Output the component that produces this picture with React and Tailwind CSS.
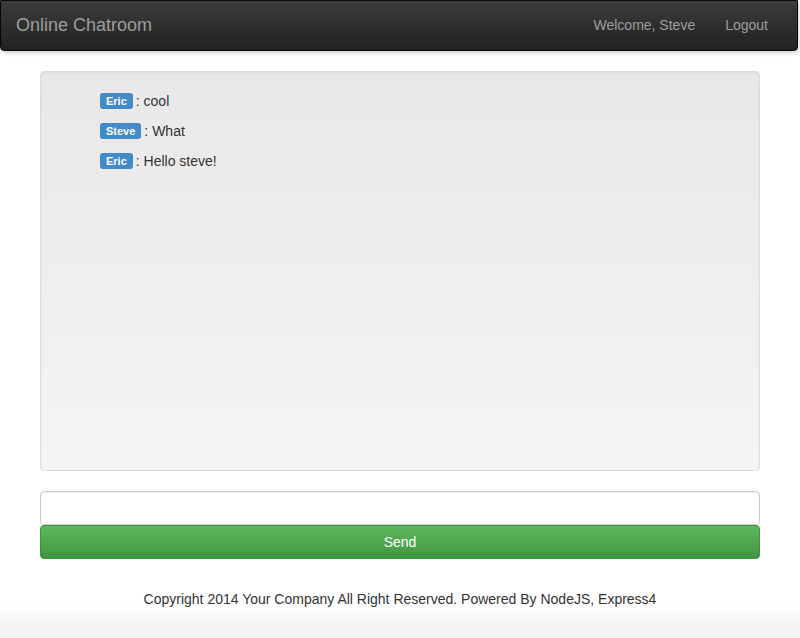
import React from "react";

const font = { fontFamily: '"Liberation Sans", Arial, Helvetica, sans-serif' };

function Msg({ name, text }) {
  return (
    <div className="flex items-center h-5 text-[14px] text-[#333]">
      <span className="inline-flex items-center h-4 px-[6px] rounded-[3px] bg-[#428bca] text-white text-[11px] font-bold leading-none">
        {name}
      </span>
      <span className="ml-[3px]">: {text}</span>
    </div>
  );
}

export default function App() {
  return (
    <div className="min-h-[638px] bg-white flex flex-col" style={font}>
      <div className="h-[51px] w-[798px] flex items-center justify-between rounded-b-[4px] border border-[#080808] bg-gradient-to-b from-[#3c3c3c] to-[#222222] shadow-[0_1px_5px_rgba(0,0,0,0.25)]">
        <span className="pl-[15px] text-[18px] text-[#9d9d9d]">Online Chatroom</span>
        <div className="flex items-center pr-[14px] text-[14px] text-[#9d9d9d]">
          <span className="px-[15px]">Welcome, Steve</span>
          <span className="px-[15px]">Logout</span>
        </div>
      </div>
      <div className="px-[40px] pt-[20px]">
        <div className="h-[400px] rounded-[4px] border border-[#dcdcdc] bg-gradient-to-b from-[#e8e8e8] to-[#f5f5f5] shadow-[inset_0_1px_3px_rgba(0,0,0,0.05)] pt-[19px] pl-[59px] flex flex-col gap-[10px]">
          <Msg name="Eric" text="cool" />
          <Msg name="Steve" text="What" />
          <Msg name="Eric" text="Hello steve!" />
        </div>
        <div className="mt-[20px] h-[34px] rounded-[4px] border border-[#cccccc] bg-white shadow-[inset_0_1px_1px_rgba(0,0,0,0.075)]"></div>
        <div className="h-[34px] rounded-[4px] border border-[#3e8f3e] bg-gradient-to-b from-[#5cb85c] to-[#419641] flex items-center justify-center text-white text-[14px]">
          Send
        </div>
      </div>
      <div className="flex-1 flex flex-col bg-gradient-to-b from-white from-[55%] to-[#f0f0f0]">
        <div className="pt-[30px] text-center text-[14px] leading-5 text-[#333]">
          Copyright 2014 Your Company All Right Reserved. Powered By NodeJS, Express4
        </div>
      </div>
    </div>
  );
}
